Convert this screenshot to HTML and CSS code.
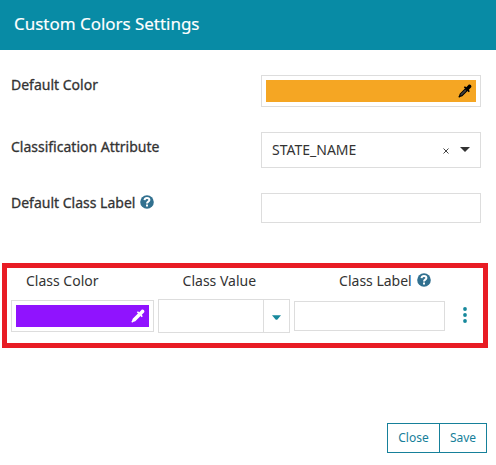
FILE: index.html
```html
<!DOCTYPE html>
<html lang="en">
<head>
<meta charset="utf-8">
<title>Custom Colors Settings</title>
<link rel="stylesheet" href="styles.css">
</head>
<body>
<svg class="defs" aria-hidden="true">
  <symbol id="dropper" viewBox="0 0 14 14">
    <path d="M7.2 4.2 1.7 9.7 1 12l-.7.8.9.9.8-.7 2.3-.7 5.5-5.5z" fill="currentColor"/>
    <path class="tube" d="M7.2 5.6 2.7 10.1l-.4 1.5 1.5-.4L8.4 6.8z"/>
    <path d="M5.8 3.3 6.9 2.2l1.4 1L10.4 1c1.5-1.5 4 .9 2.6 2.5l-2.2 2.2 1 1.5-1.1 1.1z" fill="currentColor"/>
  </symbol>
  <symbol id="help" viewBox="0 0 14 14">
    <circle cx="7" cy="7" r="6.8" fill="#31708f"/>
    <path d="M4.5 5.1C4.7 3.6 5.7 3 7 3c1.5 0 2.4.8 2.4 2C9.4 6.7 7 6.6 7 8.5" fill="none" stroke="#fff" stroke-width="2"/>
    <path d="M6 9.5h2v1.9H6z" fill="#fff"/>
  </symbol>
</svg>
<header class="header"><h1 class="title">Custom Colors Settings</h1></header>
<main class="form">
  <div class="row row-color">
    <span class="label">Default Color</span>
    <div class="color-box"><div class="swatch orange"><svg class="dropper"><use href="#dropper"/></svg></div></div>
  </div>
  <div class="row row-attr">
    <span class="label">Classification Attribute</span>
    <div class="select"><span class="select-value">STATE_NAME</span><svg class="clear" viewBox="0 0 6 6"><path d="M.5.5l5 5M5.5.5l-5 5"/></svg><svg class="caret" viewBox="0 0 10 5"><path d="M0 0h10L5 5z"/></svg></div>
  </div>
  <div class="row row-label">
    <span class="label">Default Class Label</span><svg class="help"><use href="#help"/></svg>
    <div class="input"></div>
  </div>
</main>
<section class="classes">
  <div class="head"><span class="h-color">Class Color</span><span class="h-value">Class Value</span><span class="h-label">Class Label</span><svg class="help"><use href="#help"/></svg></div>
  <div class="fields">
    <div class="color-box small"><div class="swatch purple"><svg class="dropper"><use href="#dropper"/></svg></div></div>
    <div class="combo"><div class="combo-input"></div><div class="combo-btn"><svg viewBox="0 0 8 4"><path d="M0 0h8L4.6 4H3.4z"/></svg></div></div>
    <div class="input class-input"></div>
    <svg class="dots" viewBox="0 0 4 16"><circle cx="2" cy="2" r="1.9"/><circle cx="2" cy="8" r="1.9"/><circle cx="2" cy="14" r="1.9"/></svg>
  </div>
</section>
<footer class="footer"><div class="btn close">Close</div><div class="btn save">Save</div></footer>
</body>
</html>
```

FILE: styles.css
```css
* { box-sizing: border-box; }
body { margin: 0; height: 465px; overflow: hidden; background: #fff; color: #333; font: 14px/20px "Noto Sans", sans-serif; }
svg { display: block; flex: none; }
.defs { display: none; }
.header { height: 50px; padding: 12px 14px; background: #088ba5; }
.title { margin: 0; font-size: 17px; line-height: 24px; font-weight: 400; color: #fff; letter-spacing: -0.03px; -webkit-text-stroke: 0.15px #fff; white-space: nowrap; }
.form { height: 213px; padding: 25px 15px 0 11px; }
.row { display: flex; }
.row > :last-child { margin-left: auto; }
.label { white-space: nowrap; -webkit-text-stroke: 0.3px #333; }
.row-color { height: 57px; }
.row-attr { height: 61px; }
.row-attr .label { margin-top: 5px; }
.row-label { height: 30px; }
.help { width: 14px; height: 14px; }
.row-label .help { margin: 2px 0 0 5px; }
.color-box { width: 220px; height: 32px; padding: 4px; border: 1px solid #ddd; }
.swatch { display: flex; justify-content: flex-end; align-items: center; height: 22px; padding-right: 4px; }
.orange { background: #f5a623; color: #000; }
.purple { background: #9013fe; color: #fff; }
.dropper { width: 14px; height: 14px; }
.tube { fill: #fff; fill-opacity: 0.25; }
.purple .tube { fill: #9013fe; fill-opacity: 0.2; }
.select { display: flex; align-items: center; width: 220px; height: 36px; padding: 0 10px; border: 1px solid #ddd; }
.select-value { margin-right: auto; }
.clear { width: 6px; height: 6px; margin: 2px 11px 0 0; fill: none; stroke: #444; }
.caret { width: 10px; height: 5px; margin-top: -1px; fill: #333; }
.input { width: 220px; height: 30px; border: 1px solid #ddd; }
.classes { width: 486px; height: 85px; margin-left: 2px; border: 5px solid #e81c24; }
.head { display: flex; height: 31px; padding: 3px 0 0 19px; white-space: nowrap; }
.h-value { margin-left: 84px; }
.h-label { margin-left: 83px; }
.head .help { margin: 2px 0 0 5px; }
.fields { display: flex; align-items: center; height: 34px; padding-left: 4px; }
.small { width: 143px; }
.combo { display: flex; width: 132px; height: 34px; margin: 0 4px; border: 1px solid #ddd; }
.combo-input { width: 105px; border-right: 1px solid #ddd; }
.combo-btn { display: flex; flex: 1; align-items: center; justify-content: center; }
.combo-btn svg { width: 9px; height: 5px; margin-top: 2px; fill: #16889c; }
.class-input { width: 151px; }
.dots { width: 4px; height: 16px; margin: -3px 0 0 18px; fill: #16889c; }
.footer { display: flex; justify-content: flex-end; margin-top: 75px; padding-right: 9px; }
.btn { height: 30px; border: 1px solid #16809a; color: #16809a; font-size: 12px; line-height: 28px; text-align: center; }
.close { width: 53px; }
.save { width: 48px; margin-left: -1px; }
```
